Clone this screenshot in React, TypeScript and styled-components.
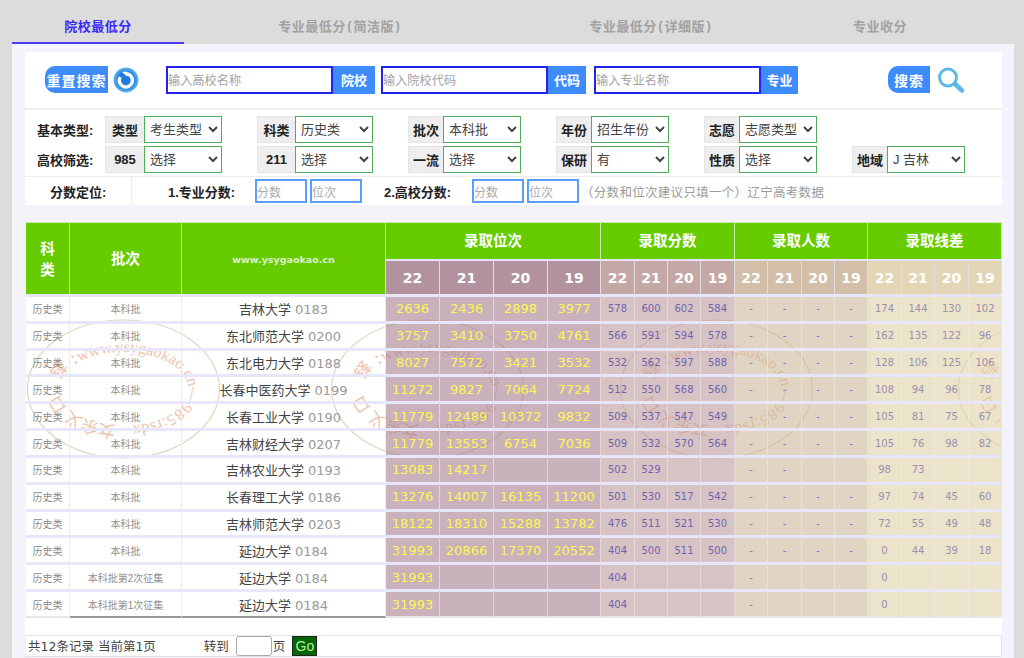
import React from "react";
import styled, { createGlobalStyle } from "styled-components";

const CJK = `"Noto Sans CJK SC", sans-serif`;
const Global = createGlobalStyle`
  html, body { margin: 0; padding: 0; background: #dcdcdc; overflow: hidden; }
  body { font-family: "Liberation Sans", ${CJK}; }
  * { box-sizing: border-box; }
`;

const Page = styled.div`width: 1024px; height: 658px; padding: 0 10px 0 12px; overflow: hidden;`;
const Tabs = styled.div`display: flex; height: 44px;`;
const Tab = styled.div<{ $w: number; $active?: boolean }>`
  width: ${(p) => p.$w}px;
  display: flex; align-items: center; justify-content: center;
  padding-top: 8px;
  font-size: 13px; font-weight: 700; letter-spacing: 0.5px;
  color: ${(p) => (p.$active ? "#3a2bf5" : "#a2a2a2")};
  border-bottom: 2px solid ${(p) => (p.$active ? "#4a3cf0" : "transparent")};
`;
const Paren = styled.span`margin: 0 1.5px;`;
const Panel = styled.div`background: #f3f3f9; width: 1002px; height: 614px; padding: 8px 12px 0 13px;`;
const SearchBox = styled.div`background: #fff; width: 977px;`;
const SearchRow = styled.div`
  height: 58px; display: flex; align-items: center; padding: 0 0 1px 20px;
  border-bottom: 2px solid #ededf0;
`;
const ImageButton = styled.div<{ $w: number; $ml?: number }>`
  width: ${(p) => p.$w}px; height: 27px; margin-left: ${(p) => p.$ml ?? 0}px;
  background: #3d8bfd; color: #fff; border-radius: 10px 0 0 10px;
  font-size: 14px; font-weight: 700; letter-spacing: 1px; white-space: nowrap;
  display: flex; align-items: center; justify-content: center;
  flex: none;
`;
const Field = styled.input<{ $ml: number }>`
  width: 167px; height: 28px; margin-left: ${(p) => p.$ml}px;
  border: 2px solid #2323ee; padding: 0; outline: none; flex: none;
  font-size: 12.2px; font-family: ${CJK}; background: #fff;
  &::placeholder { color: #a3a3a3; opacity: 1; }
`;
const FieldTag = styled.div<{ $w: number }>`
  width: ${(p) => p.$w}px; height: 28px; flex: none;
  background: #3d8bfd; color: #fff; font-size: 13px; font-weight: 700;
  display: flex; align-items: center; justify-content: center;
`;
const IconWrap = styled.svg<{ $ml: number }>`margin-left: ${(p) => p.$ml}px; flex: none;`;

const FilterRows = styled.div`
  display: flex; flex-direction: column; gap: 3px; padding: 6px 0 3px 12px;
  border-bottom: 1px solid #ededf0;
`;
const FilterRow = styled.div`display: flex; align-items: center;`;
const FilterTitle = styled.div`
  width: 68px; font-size: 13px; font-weight: 700; color: #222; white-space: nowrap;
`;
const FilterGrid = styled.div`
  display: grid; grid-template-columns: 117px 116px 113px 113px 113px 113px; column-gap: 35px;
`;
const Group = styled.div`display: flex; height: 27px;`;
const GroupTag = styled.div`
  flex: 1; background: #eeeeee; border: 1px solid #e4e4e4; border-right: none;
  font-size: 13px; font-weight: 700; color: #222;
  display: flex; align-items: center; justify-content: center;
`;
const Select = styled.select`
  width: 78px; height: 27px; flex: none; border: 1px solid #4fae57; border-radius: 0;
  background: #fff; color: #444; font-size: 13px; font-family: "Liberation Sans", ${CJK};
  padding: 0 0 0 1px; outline: none;
`;

const LocateRow = styled.div`display: flex; align-items: center; height: 28px;`;
const LocateHead = styled.div`
  width: 107px; height: 100%; padding-left: 25px; border-right: 1px dotted #ddd;
  display: flex; align-items: center; font-size: 13px; font-weight: 700; color: #222; white-space: nowrap;
`;
const LocateLabel = styled.div<{ $ml: number; $w: number }>`
  margin-left: ${(p) => p.$ml}px; width: ${(p) => p.$w}px; flex: none;
  font-size: 13px; font-weight: 700; color: #222; white-space: nowrap;
`;
const MiniField = styled.input<{ $ml?: number }>`
  width: 52px; height: 24px; margin-left: ${(p) => p.$ml ?? 0}px; flex: none;
  border: 2px solid #5b9dfb; padding: 0; outline: none;
  font-size: 12px; font-family: ${CJK}; background: #fff;
  &::placeholder { color: #aaa; opacity: 1; }
`;
const Hint = styled.div`
  margin-left: 2px; font-size: 12.5px; color: #9b9b9b; letter-spacing: 0.3px; white-space: nowrap;
`;

const TableWrap = styled.div`position: relative; width: 976px; margin: 17px 0 0 1px; background: #fff;`;
const Sheet = styled.table`
  position: relative; border-collapse: separate; border-spacing: 0; table-layout: fixed; width: 976px;
`;
const HeadCell = styled.th<{ $h?: number }>`
  background: #66cc00; color: #fff; font-weight: 700; font-size: 14.5px; padding: 0; line-height: 21px;
  border: 1px solid #cfe6bb; border-width: 1px 1px 0 0;
  ${(p) => (p.$h ? `height: ${p.$h}px;` : "padding-top: 2px;")}
`;
const GroupHead = styled(HeadCell)`padding-top: 0;`;
const SiteCell = styled(HeadCell)`
  font-family: "DejaVu Sans", sans-serif; font-size: 9.5px; color: #dcefc8;
`;
const YEAR_BG: Record<string, string> = { rank: "#b2929f", score: "#c4a8a5", count: "#d3bfa9", diff: "#e3d6b6" };
const YearCell = styled.th<{ $k: string }>`
  background: ${(p) => YEAR_BG[p.$k]}; color: #fff; padding: 0;
  font-family: "DejaVu Sans", sans-serif; font-weight: 700; font-size: 14px;
  border-top: 2px solid #e6e4fa; border-right: 1px solid #e2dbe0;
`;
const BaseCell = styled.td`
  height: 26.83px; padding: 0; text-align: center; white-space: nowrap; overflow: visible;
  border-top: 3px solid #e8e6fb; border-right: 1px solid #ebebfb;
`;
const KindCell = styled(BaseCell)`font-size: 10px; color: #8a8a8a;`;
const BatchCell = styled(BaseCell)`font-size: 10px; color: #8f8f8f;`;
const NameCell = styled(BaseCell)`font-size: 13px; color: #444; font-family: "Liberation Sans", ${CJK};`;
const Code = styled.span`
  font-family: "DejaVu Sans", sans-serif; font-size: 13px; color: #999; margin-left: 4px;
`;
const RankCell = styled(BaseCell)`
  background: rgba(165, 127, 143, 0.6); color: #fff650; font-family: "DejaVu Sans", sans-serif; font-size: 13px;
  border-right-color: #e0d6dc;
`;
const ScoreCell = styled(BaseCell)`
  background: rgba(188, 155, 157, 0.6); color: #6f63b0; font-family: "DejaVu Sans", sans-serif; font-size: 10px;
  border-right-color: #e4d9da;
`;
const CountCell = styled(BaseCell)`
  background: rgba(203, 185, 153, 0.6); color: #7272d8; font-family: "DejaVu Sans", sans-serif; font-size: 10px;
  border-right-color: #e9e1d3;
`;
const DiffCell = styled(BaseCell)`
  background: rgba(222, 210, 168, 0.6); color: #9b90ae; font-family: "DejaVu Sans", sans-serif; font-size: 10px;
  border-right-color: #efe9d6;
`;
const BodyRow = styled.tr`
  &:last-child td { height: 28.83px; border-bottom: 2px solid #e6e6e8; }
  &:last-child td:nth-child(2), &:last-child td:nth-child(3) { border-bottom-color: #999; }
`;
const Stamps = styled.svg`position: absolute; left: 0; top: 0; pointer-events: none;`;
const StampRing = styled.ellipse`fill: none; stroke: #e0d6c0; stroke-width: 1.2;`;
const StampLatin = styled.text`
  fill: #efc2aa; font-family: "Liberation Serif", serif; font-size: 16px;
`;
const StampGlyph = styled.text`
  fill: #efc2aa; font-family: ${CJK}; font-size: 17px; text-anchor: middle;
`;

const BottomGap = styled.div`background: #fff; width: 977px; height: 17px;`;
const Pager = styled.div`
  background: #fff; width: 977px; height: 22px; border: 1px solid #e4e4e4; border-left-color: #eee;
  display: flex; align-items: center; padding-left: 2px;
  font-size: 13px; color: #444; white-space: nowrap;
  font-family: "DejaVu Sans", ${CJK};
`;
const PagerText = styled.span<{ $ml?: number }>`margin-left: ${(p) => p.$ml ?? 0}px; font-size: 12.5px;`;
const PagerInput = styled.input`
  width: 36px; height: 20px; margin: 0 1px 0 7px; border: 1px solid #aaa; border-radius: 3px; background: #fff; outline: none;
`;
const GoButton = styled.div`
  width: 25px; height: 20px; margin-left: 7px; background: #006600; border: 1px solid #222;
  color: #b8f0a0; font-family: "Liberation Sans", sans-serif; font-size: 14px;
  display: flex; align-items: center; justify-content: center;
`;

type Row = { b: string; n: string; c: string; r: string[]; s: string[]; p: string[]; d: string[] };
const BK = "本科批";
const D = ["-", "-", "-", "-"];
const rows: Row[] = [
  { b: BK, n: "吉林大学", c: "0183", r: ["2636", "2436", "2898", "3977"], s: ["578", "600", "602", "584"], p: D, d: ["174", "144", "130", "102"] },
  { b: BK, n: "东北师范大学", c: "0200", r: ["3757", "3410", "3750", "4761"], s: ["566", "591", "594", "578"], p: D, d: ["162", "135", "122", "96"] },
  { b: BK, n: "东北电力大学", c: "0188", r: ["8027", "7572", "3421", "3532"], s: ["532", "562", "597", "588"], p: D, d: ["128", "106", "125", "106"] },
  { b: BK, n: "长春中医药大学", c: "0199", r: ["11272", "9827", "7064", "7724"], s: ["512", "550", "568", "560"], p: D, d: ["108", "94", "96", "78"] },
  { b: BK, n: "长春工业大学", c: "0190", r: ["11779", "12489", "10372", "9832"], s: ["509", "537", "547", "549"], p: D, d: ["105", "81", "75", "67"] },
  { b: BK, n: "吉林财经大学", c: "0207", r: ["11779", "13553", "6754", "7036"], s: ["509", "532", "570", "564"], p: D, d: ["105", "76", "98", "82"] },
  { b: BK, n: "吉林农业大学", c: "0193", r: ["13083", "14217", "", ""], s: ["502", "529", "", ""], p: ["-", "-", "", ""], d: ["98", "73", "", ""] },
  { b: BK, n: "长春理工大学", c: "0186", r: ["13276", "14007", "16135", "11200"], s: ["501", "530", "517", "542"], p: D, d: ["97", "74", "45", "60"] },
  { b: BK, n: "吉林师范大学", c: "0203", r: ["18122", "18310", "15288", "13782"], s: ["476", "511", "521", "530"], p: D, d: ["72", "55", "49", "48"] },
  { b: BK, n: "延边大学", c: "0184", r: ["31993", "20866", "17370", "20552"], s: ["404", "500", "511", "500"], p: D, d: ["0", "44", "39", "18"] },
  { b: "本科批第2次征集", n: "延边大学", c: "0184", r: ["31993", "", "", ""], s: ["404", "", "", ""], p: ["-", "", "", ""], d: ["0", "", "", ""] },
  { b: "本科批第1次征集", n: "延边大学", c: "0184", r: ["31993", "", "", ""], s: ["404", "", "", ""], p: ["-", "", "", ""], d: ["0", "", "", ""] },
];
const widths = [44, 112, 204, 54, 54, 54, 53, 34, 33, 33, 34, 33, 34, 33, 33, 34, 33, 34, 33];
const years = ["22", "21", "20", "19"];
const stampXs = [1, 305, 594, 932];
const stampGlyphs: [string, string][] = [
  ["女", "5%"], ["余", "10%"], ["义", "15%"], ["口", "21%"], ["铎", "30%"], [":", "35%"],
];

const Stamp = ({ x, id }: { x: number; id: number }) => (
  <g transform={`translate(${x} 98)`}>
    <StampRing cx="96.5" cy="69" rx="96" ry="69" />
    <defs>
      <path id={`arc${id}`} d="M 96.5 106 A 65 37 0 1 1 96.5 32 A 65 37 0 1 1 96.5 106" />
    </defs>
    {stampGlyphs.map(([g, o]) => (
      <StampGlyph key={o}>
        <textPath href={`#arc${id}`} startOffset={o}>{g}</textPath>
      </StampGlyph>
    ))}
    <StampLatin>
      <textPath href={`#arc${id}`} startOffset="36%">www.ysygaokao.cn</textPath>
    </StampLatin>
    <StampLatin>
      <textPath href={`#arc${id}`} startOffset="74%" letterSpacing="0.5">—985:rsdx</textPath>
    </StampLatin>
  </g>
);

const F = ({ tag, v }: { tag: string; v: string }) => (
  <Group>
    <GroupTag>{tag}</GroupTag>
    <Select defaultValue={v}><option>{v}</option></Select>
  </Group>
);

export default function App() {
  return (
    <Page>
      <Global />
      <Tabs>
        <Tab $w={172} $active>院校最低分</Tab>
        <Tab $w={312}>专业最低分<Paren>(</Paren>简洁版<Paren>)</Paren></Tab>
        <Tab $w={310}>专业最低分<Paren>(</Paren>详细版<Paren>)</Paren></Tab>
        <Tab $w={148}>专业收分</Tab>
      </Tabs>
      <Panel>
        <SearchBox>
          <SearchRow>
            <ImageButton $w={63}>重置搜索</ImageButton>
            <IconWrap $ml={5} width="26" height="26" viewBox="0 0 26 26">
              <defs>
                <radialGradient id="blueBall" cx="50%" cy="50%" r="52%">
                  <stop offset="60%" stopColor="#1a7fe0" />
                  <stop offset="100%" stopColor="#6dbcf2" />
                </radialGradient>
              </defs>
              <circle cx="13" cy="13" r="12.5" fill="url(#blueBall)" />
              <path d="M13.5 6.8 A6.6 6.6 0 1 1 7.2 10" fill="none" stroke="#fff" strokeWidth="3.4" />
              <path d="M9 5 L14 4.5 L14 9.5 Z" fill="#fff" />
            </IconWrap>
            <Field $ml={27} placeholder="输入高校名称" />
            <FieldTag $w={42}>院校</FieldTag>
            <Field $ml={6} placeholder="输入院校代码" />
            <FieldTag $w={38}>代码</FieldTag>
            <Field $ml={8} placeholder="输入专业名称" />
            <FieldTag $w={37}>专业</FieldTag>
            <ImageButton $w={42} $ml={90}>搜索</ImageButton>
            <IconWrap $ml={7} width="28" height="26" viewBox="0 0 28 26">
              <circle cx="11" cy="10.5" r="8.5" fill="none" stroke="#5cb9e6" strokeWidth="3" />
              <path d="M18 17 L25 23.5" stroke="#5cb9e6" strokeWidth="4.5" strokeLinecap="round" />
            </IconWrap>
          </SearchRow>
          <FilterRows>
            <FilterRow>
              <FilterTitle>基本类型:</FilterTitle>
              <FilterGrid>
                <F tag="类型" v="考生类型" />
                <F tag="科类" v="历史类" />
                <F tag="批次" v="本科批" />
                <F tag="年份" v="招生年份" />
                <F tag="志愿" v="志愿类型" />
              </FilterGrid>
            </FilterRow>
            <FilterRow>
              <FilterTitle>高校筛选:</FilterTitle>
              <FilterGrid>
                <F tag="985" v="选择" />
                <F tag="211" v="选择" />
                <F tag="一流" v="选择" />
                <F tag="保研" v="有" />
                <F tag="性质" v="选择" />
                <F tag="地域" v="J 吉林" />
              </FilterGrid>
            </FilterRow>
          </FilterRows>
          <LocateRow>
            <LocateHead>分数定位:</LocateHead>
            <LocateLabel $ml={36} $w={87}>1.专业分数:</LocateLabel>
            <MiniField placeholder="分数" />
            <MiniField $ml={3} placeholder="位次" />
            <LocateLabel $ml={22} $w={88}>2.高校分数:</LocateLabel>
            <MiniField placeholder="分数" />
            <MiniField $ml={3} placeholder="位次" />
            <Hint>（分数和位次建议只填一个）辽宁高考数据</Hint>
          </LocateRow>
        </SearchBox>
        <TableWrap>
          <Stamps width="976" height="396" viewBox="0 0 976 396">
            {stampXs.map((x, i) => <Stamp key={i} x={x} id={i} />)}
          </Stamps>
          <Sheet>
            <colgroup>
              {widths.map((w, i) => <col key={i} style={{ width: w }} />)}
            </colgroup>
            <thead>
              <tr>
                <HeadCell rowSpan={2}>科<br />类</HeadCell>
                <HeadCell rowSpan={2}>批次</HeadCell>
                <SiteCell rowSpan={2}>www.ysygaokao.cn</SiteCell>
                <GroupHead colSpan={4} $h={37}>录取位次</GroupHead>
                <GroupHead colSpan={4}>录取分数</GroupHead>
                <GroupHead colSpan={4}>录取人数</GroupHead>
                <GroupHead colSpan={4}>录取线差</GroupHead>
              </tr>
              <tr style={{ height: 35 }}>
                {["rank", "score", "count", "diff"].map((k) =>
                  years.map((y) => <YearCell key={k + y} $k={k}>{y}</YearCell>)
                )}
              </tr>
            </thead>
            <tbody>
              {rows.map((r, i) => (
                <BodyRow key={i}>
                  <KindCell>历史类</KindCell>
                  <BatchCell>{r.b}</BatchCell>
                  <NameCell>{r.n}<Code>{r.c}</Code></NameCell>
                  {r.r.map((v, j) => <RankCell key={j}>{v}</RankCell>)}
                  {r.s.map((v, j) => <ScoreCell key={j}>{v}</ScoreCell>)}
                  {r.p.map((v, j) => <CountCell key={j}>{v}</CountCell>)}
                  {r.d.map((v, j) => <DiffCell key={j}>{v}</DiffCell>)}
                </BodyRow>
              ))}
            </tbody>
          </Sheet>
        </TableWrap>
        <BottomGap />
        <Pager>
          <PagerText>共12条记录 当前第1页</PagerText>
          <PagerText $ml={48}>转到</PagerText>
          <PagerInput />
          <PagerText>页</PagerText>
          <GoButton>Go</GoButton>
        </Pager>
      </Panel>
    </Page>
  );
}
